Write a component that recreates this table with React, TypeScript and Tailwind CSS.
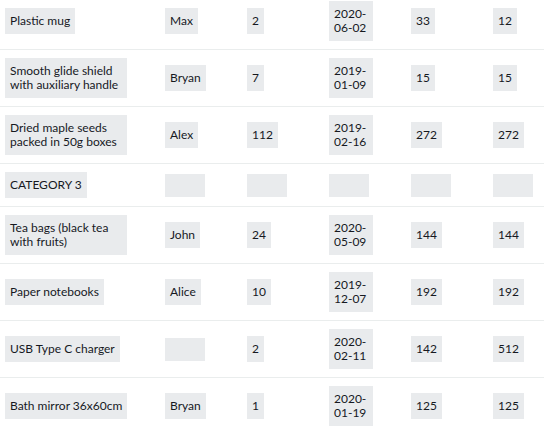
import React from 'react';

type Row = {
  item: string[];
  owner?: string;
  qty?: string;
  date?: string[];
  a?: string;
  b?: string;
};

const rows: Row[] = [
  { item: ['Plastic mug'], owner: 'Max', qty: '2', date: ['2020-', '06-02'], a: '33', b: '12' },
  { item: ['Smooth glide shield', 'with auxiliary handle'], owner: 'Bryan', qty: '7', date: ['2019-', '01-09'], a: '15', b: '15' },
  { item: ['Dried maple seeds', 'packed in 50g boxes'], owner: 'Alex', qty: '112', date: ['2019-', '02-16'], a: '272', b: '272' },
  { item: ['CATEGORY 3'] },
  { item: ['Tea bags (black tea', 'with fruits)'], owner: 'John', qty: '24', date: ['2020-', '05-09'], a: '144', b: '144' },
  { item: ['Paper notebooks'], owner: 'Alice', qty: '10', date: ['2019-', '12-07'], a: '192', b: '192' },
  { item: ['USB Type C charger'], qty: '2', date: ['2020-', '02-11'], a: '142', b: '512' },
  { item: ['Bath mirror 36x60cm'], owner: 'Bryan', qty: '1', date: ['2020-', '01-19'], a: '125', b: '125' },
];

// grey placeholder box around each cell value
const Cell = ({ lines, w }: { lines?: string[]; w?: string }) =>
  lines && lines.length ? (
    <div className={`bg-[#e9ebed] px-[5px] py-[6px] whitespace-nowrap ${w ?? ''}`}>
      {lines.map((l, i) => (
        <div key={i}>{l}</div>
      ))}
    </div>
  ) : (
    <div className="bg-[#e9ebed] w-[40px] h-[23px]" />
  );

export default function App() {
  return (
    <div
      className="w-[544px] h-[432px] overflow-hidden bg-white text-[#16191f] text-[12px] leading-[14px]"
      style={{ fontFamily: 'Lato, "Open Sans", sans-serif' }}
    >
      {rows.map((r, i) => {
        const wrapped = r.item.length > 1;
        return (
          <div
            key={i}
            className={`grid grid-cols-[160px_82px_82px_82px_82px_1fr] items-center pl-[5px] pb-[8px] border-b border-[#eaeded] ${i === 0 ? 'pt-[1px]' : 'pt-[8px]'}`}
          >
            <div className="flex">
              <Cell lines={r.item} w={wrapped ? 'w-[122px]' : ''} />
            </div>
            <div className="flex">
              <Cell lines={r.owner ? [r.owner] : undefined} />
            </div>
            <div className="flex">
              <Cell lines={r.qty ? [r.qty] : undefined} />
            </div>
            <div className="flex">
              <Cell lines={r.date} w="w-[44px]" />
            </div>
            <div className="flex">
              <Cell lines={r.a ? [r.a] : undefined} />
            </div>
            <div className="flex">
              <Cell lines={r.b ? [r.b] : undefined} />
            </div>
          </div>
        );
      })}
    </div>
  );
}
